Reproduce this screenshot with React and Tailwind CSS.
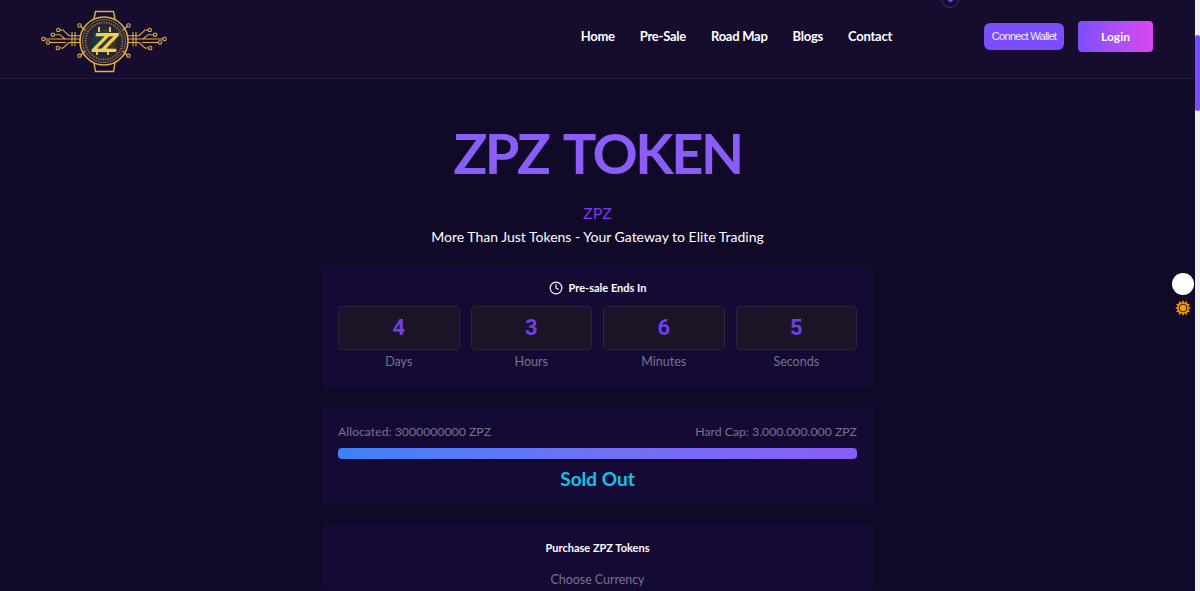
import { Clock } from "lucide-react";

const navLinks = ["Home", "Pre-Sale", "Road Map", "Blogs", "Contact"];

const countdown = [
  { value: 4, label: "Days" },
  { value: 3, label: "Hours" },
  { value: 6, label: "Minutes" },
  { value: 5, label: "Seconds" },
];

const Wing = () => (
  <g fill="none" stroke="#e0b04a" strokeWidth="1.1">
    <path d="M45 40H80" />
    <path d="M54.5 35.7H60L65 40" />
    <path d="M60 31H63L69 36.7H80" />
    <path d="M50 43.5H66" />
    <path d="M59.5 49H63L69 43.5H80" />
    <path d="M72 33V47" />
    <path d="M75 33V47" />
    <path d="M81 27.5L85 31" />
    <path d="M81 56L85 52" />
    <circle cx="43.5" cy="40" r="1.7" />
    <circle cx="52.8" cy="35.7" r="1.7" />
    <circle cx="58.3" cy="31" r="1.7" />
    <circle cx="48" cy="43.5" r="1.7" />
    <circle cx="57.8" cy="49" r="1.7" />
    <circle cx="79.5" cy="26.5" r="1.7" />
    <circle cx="79.5" cy="56.8" r="1.7" />
  </g>
);

const Logo = () => (
  <svg width="126" height="66" viewBox="41 10 126 66" className="mt-[5px]">
    <Wing />
    <g transform="translate(208,0) scale(-1,1)">
      <Wing />
    </g>
    <g fill="none" stroke="#e0b04a">
      <circle cx="104" cy="42" r="24" strokeWidth="1.6" />
      <path d="M94 20L95.5 12.5H113.5L115 20" strokeWidth="1.4" />
      <path d="M94 64L95.5 72.5H113.5L115 64" strokeWidth="1.4" />
    </g>
    <circle cx="104" cy="42" r="21.5" fill="#2a2433" stroke="#8a6d35" strokeWidth="1" />
    <circle cx="104" cy="42" r="18.5" fill="none" stroke="#a08648" strokeWidth="2" strokeDasharray="1 1.4" />
    <path d="M92 42A12 12 0 0 1 104 30V54A12 12 0 0 1 92 42Z" fill="#1d3a44" />
    <path d="M104 30A12 12 0 0 1 116 42A12 12 0 0 1 104 54Z" fill="#3a3a1e" />
    <text x="92" y="53" fontFamily="'Liberation Sans', sans-serif" fontWeight="700" fontStyle="italic" fontSize="28" letterSpacing="-8" fill="#f2cf5a">ZZ</text>
    <path d="M99 28V33M110 28V33M97 51V56M108 51V56" stroke="#f2cf5a" strokeWidth="1.8" />
  </svg>
);

const SunIcon = () => (
  <svg width="16" height="16" viewBox="0 0 18 18">
    <path
      d="M9 0L10.6 3 13.5 1.2 13.7 4.3 16.8 4.5 15 7.4 18 9 15 10.6 16.8 13.5 13.7 13.7 13.5 16.8 10.6 15 9 18 7.4 15 4.5 16.8 4.3 13.7 1.2 13.5 3 10.6 0 9 3 7.4 1.2 4.5 4.3 4.3 4.5 1.2 7.4 3Z"
      fill="#e8920c"
    />
    <circle cx="9" cy="9" r="4.6" fill="#1a1020" />
    <circle cx="9" cy="9" r="3.6" fill="#f59e0b" />
  </svg>
);

const App = () => {
  return (
    <div className="relative h-[591px] overflow-hidden bg-[#100928] font-['Lato',sans-serif] text-white">
      <header className="flex h-[79px] items-center border-b border-[#241a3d] bg-[#150c2e] pl-[41px] pr-[47px]">
        <Logo />
        <div className="ml-auto flex items-center pb-[6px]">
          <nav className="mr-[92px] mt-[2px] flex gap-[25px] text-[13px] font-bold tracking-[-0.25px]">
            {navLinks.map((link) => (
              <a key={link} href="#">
                {link}
              </a>
            ))}
          </nav>
          <button className="mr-[14px] h-[27px] w-[80px] rounded-md bg-[#7c4dff] font-['Liberation_Sans',sans-serif] text-[11px] tracking-[-0.7px] text-[#f3edff]">
            Connect Wallet
          </button>
          <button className="h-[31px] w-[75px] rounded bg-gradient-to-r from-[#7c4dff] to-[#d946ef] pt-[2px] text-xs font-bold">
            Login
          </button>
        </div>
      </header>

      <main className="mr-[5px] flex flex-col items-center">
        <h1 className="mt-[38px] text-[56px] font-bold leading-[72px] tracking-[-2.5px] [word-spacing:5px] text-[#8b5cf6]">ZPZ TOKEN</h1>
        <p className="mt-[12px] leading-6 text-[#7c3aed]">ZPZ</p>
        <p className="text-sm leading-6">More Than Just Tokens - Your Gateway to Elite Trading</p>

        <section className="mt-[16px] h-[123px] w-[551px] rounded bg-[#150a33] px-4 pt-[15px]">
          <div className="flex items-center justify-center gap-[6px] text-[11px] font-bold">
            <Clock size={14} />
            <span>Pre-sale Ends In</span>
          </div>
          <div className="mt-[9px] grid grid-cols-4 gap-[11px]">
            {countdown.map((item) => (
              <div key={item.label} className="text-center">
                <div className="flex h-[44px] items-center justify-center rounded border border-[#2a2240] bg-[#1a1426] font-['Roboto',sans-serif] text-[22px] font-bold text-[#6f3fe8]">
                  {item.value}
                </div>
                <p className="text-[12.5px] leading-6 text-[#77748c]">{item.label}</p>
              </div>
            ))}
          </div>
        </section>

        <section className="mt-[18px] h-[99px] w-[551px] rounded bg-[#150a33] px-4 pt-[16px]">
          <div className="flex justify-between text-[12.25px] leading-5 text-[#77748c]">
            <span>Allocated: 3000000000 ZPZ</span>
            <span>Hard Cap: 3.000.000.000 ZPZ</span>
          </div>
          <div className="mt-[6px] h-[11px] rounded bg-gradient-to-r from-[#3b82f6] to-[#8b5cf6]" />
          <p className="mt-[6px] text-center text-[19px] font-bold leading-7 text-[#0fc4e8]">Sold Out</p>
        </section>

        <section className="mt-[19px] w-[551px] rounded bg-[#150a33] px-4 pt-[16px] text-center">
          <p className="text-[11px] font-bold leading-4">Purchase ZPZ Tokens</p>
          <p className="mt-[14px] text-[12.4px] leading-5 text-[#77748c]">Choose Currency</p>
        </section>
      </main>

      {/* cursor follower */}
      <div className="absolute left-[941px] top-[-10px] flex h-[18px] w-[18px] items-center justify-center rounded-full border border-[#3f2a80]">
        <div className="h-[5px] w-[5px] rounded-full bg-[#7c4dff]" />
      </div>

      {/* theme toggle */}
      <div className="absolute left-[1172px] top-[273px] flex flex-col items-center gap-[5px]">
        <div className="h-[22px] w-[22px] rounded-full bg-white" />
        <SunIcon />
      </div>

      {/* scrollbar */}
      <div className="absolute right-0 top-0 h-full w-[5px] bg-[#f1f1f1]">
        <div className="mt-[35px] h-[76px] rounded-sm bg-[#7c4dff]" />
      </div>
    </div>
  );
};

export default App;
